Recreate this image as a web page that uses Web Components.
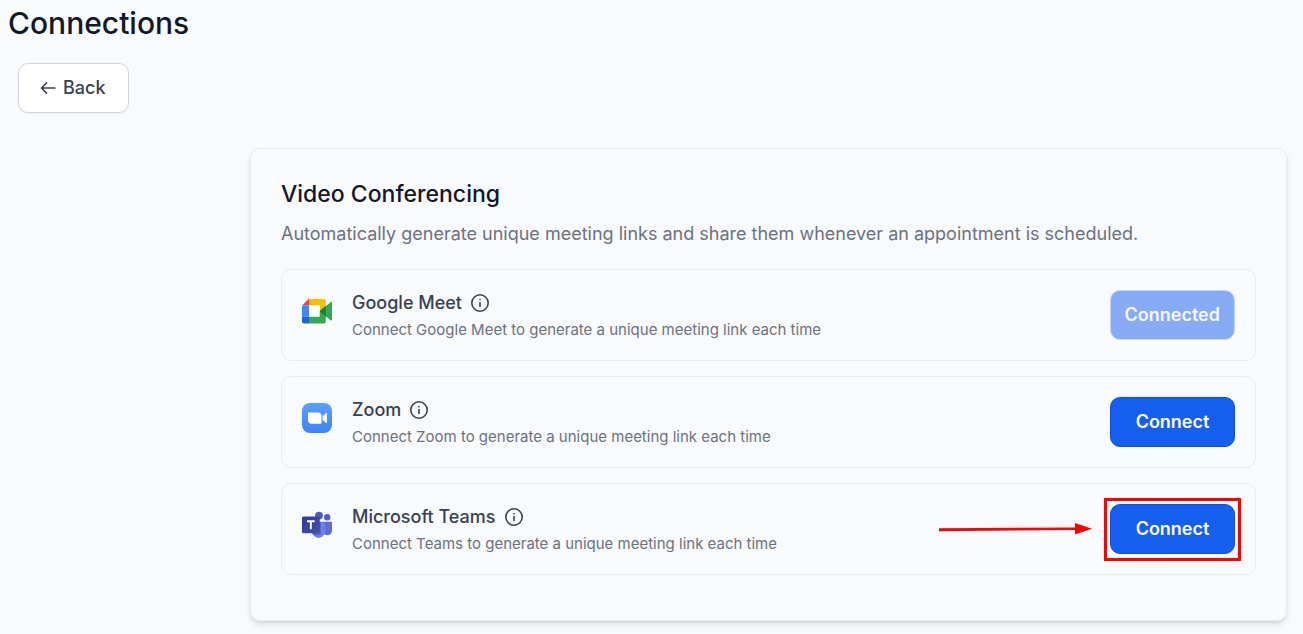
<!DOCTYPE html>
<html lang="en">
<head>
<meta charset="utf-8">
<meta name="viewport" content="width=device-width, initial-scale=1">
<title>Connections</title>
<style>
  body {
    margin: 0;
    min-height: 100vh;
    background: #f9fafc;
    color: #111827;
    font-family: Inter, "Liberation Sans", sans-serif;
  }
</style>
</head>
<body>
<connections-page>
  <back-button slot="actions">Back</back-button>
  <settings-card>
    <span slot="title">Video Conferencing</span>
    <span slot="description">Automatically generate unique meeting links and share them whenever an appointment is scheduled.</span>
    <connection-row name="Google Meet" connected>
      <brand-icon slot="icon" name="meet"></brand-icon>
      Connect Google Meet to generate a unique meeting link each time
    </connection-row>
    <connection-row name="Zoom">
      <brand-icon slot="icon" name="zoom"></brand-icon>
      Connect Zoom to generate a unique meeting link each time
    </connection-row>
    <connection-row name="Microsoft Teams" highlight>
      <brand-icon slot="icon" name="teams"></brand-icon>
      Connect Teams to generate a unique meeting link each time
    </connection-row>
  </settings-card>
</connections-page>

<script>
  // page shell: heading, actions, content beside the empty side column
  class ConnectionsPage extends HTMLElement {
    constructor() {
      super();
      this.attachShadow({ mode: 'open' });
      this.shadowRoot.innerHTML = `
        <style>
          :host { display: block; }
          h1 {
            margin: 0;
            padding: 4px 8px 0;
            font-size: 30px;
            font-weight: 500;
            line-height: 38px;
          }
          .actions { padding: 21px 18px 0; }
          main { padding: 35px 16px 12px 250px; }
          @media (max-width: 900px) {
            main { padding-left: 16px; }
          }
        </style>
        <h1>Connections</h1>
        <div class="actions"><slot name="actions"></slot></div>
        <main><slot></slot></main>
      `;
    }
  }

  class BackButton extends HTMLElement {
    constructor() {
      super();
      this.attachShadow({ mode: 'open' });
      this.shadowRoot.innerHTML = `
        <style>
          :host { display: flex; }
          button {
            display: flex;
            align-items: center;
            gap: 6px;
            height: 50px;
            padding: 0 22px 0 21px;
            border: 1px solid #d1d5e0;
            border-radius: 10px;
            background: #fff;
            box-shadow: 0 1px 2px rgba(0, 0, 0, .05);
            color: #374151;
            font: 500 18px/26px Inter, "Liberation Sans", sans-serif;
            cursor: pointer;
          }
          svg { display: block; }
        </style>
        <button type="button">
          <svg width="17" height="16" viewBox="0 0 17 16" fill="none" stroke="currentColor" stroke-width="1.7" stroke-linecap="round" stroke-linejoin="round" aria-hidden="true">
            <path d="M14.8 8H1.5M6.5 3L1.5 8l5 5"/>
          </svg>
          <slot></slot>
        </button>
      `;
    }
  }

  class SettingsCard extends HTMLElement {
    constructor() {
      super();
      this.attachShadow({ mode: 'open' });
      this.shadowRoot.innerHTML = `
        <style>
          :host {
            display: block;
            padding: 30px 30px 45px;
            border: 1px solid #e9ebef;
            border-radius: 10px;
            box-shadow: 0 4px 7px -1px rgba(0, 0, 0, .12), 0 2px 4px -2px rgba(0, 0, 0, .12);
          }
          h2 {
            margin: 0;
            font-size: 23px;
            font-weight: 500;
            line-height: 30px;
          }
          p {
            margin: 11px 0 22px;
            color: #6b7280;
            font-size: 18px;
            line-height: 27px;
          }
          .rows {
            display: flex;
            flex-direction: column;
            gap: 15px;
          }
        </style>
        <h2><slot name="title"></slot></h2>
        <p><slot name="description"></slot></p>
        <div class="rows"><slot></slot></div>
      `;
    }
  }

  class ConnectionRow extends HTMLElement {
    constructor() {
      super();
      this.attachShadow({ mode: 'open' });
    }

    connectedCallback() {
      const name = this.getAttribute('name');
      const connected = this.hasAttribute('connected');
      const highlight = this.hasAttribute('highlight');
      this.shadowRoot.innerHTML = `
        <style>
          :host {
            display: flex;
            align-items: flex-start;
            gap: 20px;
            padding: 20px;
            border: 1px solid #e9ebef;
            border-radius: 10px;
          }
          .icon { flex: none; padding-top: 6px; }
          .text { flex: 1; min-width: 0; }
          h3 {
            display: flex;
            align-items: center;
            gap: 8px;
            margin: 0;
            color: #374151;
            font-size: 18px;
            font-weight: 500;
            line-height: 26px;
          }
          p {
            margin: 3px 0 0;
            color: #6b7280;
            font-size: 15px;
            line-height: 21px;
          }
          .info {
            display: flex;
            padding: 0;
            border: 0;
            background: none;
            color: inherit;
          }
          .action {
            position: relative;
            flex: none;
          }
          .connect {
            box-sizing: border-box;
            display: block;
            min-width: 125px;
            height: 50px;
            padding: 0 14px;
            border: 1px solid #0b50e6;
            border-radius: 10px;
            background: #155eef;
            color: #fff;
            font: 600 18px/26px Inter, "Liberation Sans", sans-serif;
            cursor: pointer;
          }
          .connect:disabled {
            border-color: #c3d5fb;
            background: #88abf5;
            color: #f5f8ff;
            cursor: default;
          }
          /* callout laid over the row */
          .frame {
            position: absolute;
            inset: -6px -6px -7px;
            border: 3px solid #f00;
            pointer-events: none;
          }
          .arrow {
            position: absolute;
            right: calc(100% + 18px);
            top: 19px;
            pointer-events: none;
          }
        </style>
        <div class="icon"><slot name="icon"></slot></div>
        <div class="text">
          <h3>
            <span id="name">${name}</span>
            <button class="info" type="button" aria-label="About ${name}">
              <svg width="20" height="20" viewBox="0 0 20 20" fill="none" stroke="currentColor" stroke-width="1.6" stroke-linecap="round">
                <circle cx="10" cy="10" r="8.2"/>
                <path d="M10 9.6v3.8M10 6.6v.1"/>
              </svg>
            </button>
          </h3>
          <p><slot></slot></p>
        </div>
        <div class="action">
          <button class="connect" type="button" ${connected ? 'disabled' : ''} aria-describedby="name">${connected ? 'Connected' : 'Connect'}</button>
          ${highlight ? `
          <svg class="arrow" width="153" height="13" viewBox="0 0 153 13" fill="#f00" aria-hidden="true">
            <path d="M0 5.2L136 4.4V0L153 5.8L136 11.6V7L0 8.2Z"/>
          </svg>
          <div class="frame"></div>` : ''}
        </div>
      `;
    }
  }

  const brands = {
    meet: `
      <path d="M6 3h15.5a2.3 2.3 0 0 1 2.3 2.3V14l-5.8 3V9.5H6z" fill="#fbbc04"/>
      <path d="M7 2.8v6.7H0z" fill="#ea4335"/>
      <path d="M0 9.5h7.2v11H0z" fill="#4285f4"/>
      <path d="M0 20.5h7.2v7H2a2 2 0 0 1-2-2z" fill="#1967d2"/>
      <path d="M7 20.5h10.500v-5.200l6.300-.5v10.400a2.300 2.300 0 0 1-2.300 2.300H7z" fill="#34a853"/>
      <path d="M17.500 15.300l11-9c.8-.6 1.500-.3 1.500.6v16.800c0 .9-.7 1.200-1.500.6z" fill="#34a853"/>
      <path d="M17.500 15.300l6.300-5.200v10.400z" fill="#188038"/>
      <path d="M7 9.500h10.500v11H7z" fill="#fff"/>`,
    zoom: `
      <defs>
        <linearGradient id="sky" x1="0" y1="0" x2="0" y2="1">
          <stop offset="0" stop-color="#58a1fd"/>
          <stop offset="1" stop-color="#3e82f8"/>
        </linearGradient>
      </defs>
      <rect width="30" height="30" rx="8" fill="url(#sky)"/>
      <path d="M6 10.5c0-.6.4-1 1-1h9.300c1.800 0 3.200 1.400 3.200 3.200v7c0 .6-.4 1-1 1H9.200C7.400 20.700 6 19.300 6 17.500z" fill="#fff"/>
      <path d="M20.500 13.200l3.300-2.800c.6-.5 1.200-.4 1.200.5v8.400c0 .9-.6 1-1.200.5l-3.300-2.700z" fill="#fff"/>`,
    teams: `
      <defs>
        <linearGradient id="front" x1="0" y1="0" x2="1" y2="1">
          <stop offset="0" stop-color="#2c3b91"/>
          <stop offset="1" stop-color="#4650b5"/>
        </linearGradient>
      </defs>
      <circle cx="25.200" cy="7.200" r="3.200" fill="#4f60ca"/>
      <path d="M21 11.800h9v8.400c0 3-2.200 5-4.800 5-2.100 0-4.200-1.400-4.200-4z" fill="#5e6ed6"/>
      <circle cx="17" cy="5.600" r="3.900" fill="#4959c5"/>
      <path d="M10 11.800h11.800c.8 0 1.400.6 1.400 1.400v7.300c0 4.300-3 7.400-6.700 7.400-3.700 0-6.500-3-6.500-7.300z" fill="#7080e5"/>
      <path d="M10 11.800h8.800v11.700c0 .9-.7 1.600-1.600 1.600h-6.100c-.7-1.200-1.100-2.700-1.100-4.400z" fill="#5161c7"/>
      <rect y="6.400" width="17.800" height="16.900" rx="1.500" fill="url(#front)"/>
      <path d="M5 11.300h7.700M8.850 11.300v8" stroke="#fff" stroke-width="1.900" fill="none"/>`
  };

  class BrandIcon extends HTMLElement {
    constructor() {
      super();
      this.attachShadow({ mode: 'open' });
    }

    connectedCallback() {
      this.shadowRoot.innerHTML = `
        <style>
          :host { display: block; }
          svg { display: block; }
        </style>
        <svg width="30" height="30" viewBox="0 0 30 30" aria-hidden="true">${brands[this.getAttribute('name')]}</svg>
      `;
    }
  }

  customElements.define('connections-page', ConnectionsPage);
  customElements.define('back-button', BackButton);
  customElements.define('settings-card', SettingsCard);
  customElements.define('connection-row', ConnectionRow);
  customElements.define('brand-icon', BrandIcon);
</script>
</body>
</html>
